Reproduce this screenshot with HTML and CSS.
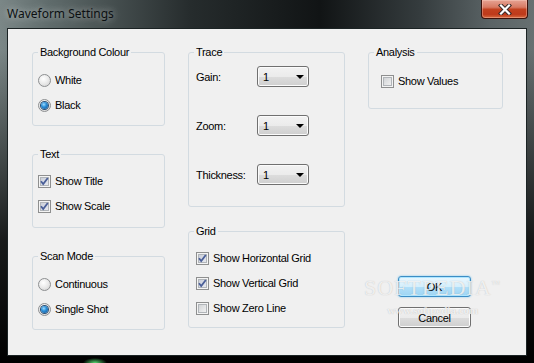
FILE: index.html
```html
<!DOCTYPE html>
<html lang="en">

    <head>
        <meta charset="UTF-8">
        <meta name="viewport" content="width=device-width, initial-scale=1.0">
        <title>Waveform Settings</title>

        <link rel="stylesheet" href="styles.css">
    </head>

    <body>
        <div class="window">
            <div class="titlebar">
                <span class="title">Waveform Settings</span>
                <span class="close">
                    <svg width="14" height="11" viewBox="0 0 14 11">
                        <path d="M3 1.5l8 8M11 1.5l-8 8" stroke="#3a2a28" stroke-width="4.2" stroke-linecap="square" />
                        <path d="M3 1.5l8 8M11 1.5l-8 8" stroke="#fff" stroke-width="2.2" stroke-linecap="square" />
                    </svg>
                </span>
            </div>

            <div class="client">
                <div class="col">
                    <fieldset class="group bg">
                        <legend>Background Colour</legend>
                        <div class="rows">
                            <label class="opt"><span class="radio"></span>White</label>
                            <label class="opt"><span class="radio on"></span>Black</label>
                        </div>
                    </fieldset>

                    <fieldset class="group">
                        <legend>Text</legend>
                        <div class="rows">
                            <label class="opt"><span class="check on"><svg viewBox="0 0 11 11"><path d="M2 5.2l2.2 2.8 4.6-6" /></svg></span>Show Title</label>
                            <label class="opt"><span class="check on"><svg viewBox="0 0 11 11"><path d="M2 5.2l2.2 2.8 4.6-6" /></svg></span>Show Scale</label>
                        </div>
                    </fieldset>

                    <fieldset class="group scan">
                        <legend>Scan Mode</legend>
                        <div class="rows">
                            <label class="opt"><span class="radio"></span>Continuous</label>
                            <label class="opt"><span class="radio on"></span>Single Shot</label>
                        </div>
                    </fieldset>
                </div>

                <div class="col">
                    <fieldset class="group trace">
                        <legend>Trace</legend>
                        <div class="fields">
                            <div class="field"><span class="name">Gain:</span><span class="combo">1<i class="arrow"></i></span></div>
                            <div class="field"><span class="name">Zoom:</span><span class="combo">1<i class="arrow"></i></span></div>
                            <div class="field"><span class="name">Thickness:</span><span class="combo">1<i class="arrow"></i></span></div>
                        </div>
                    </fieldset>

                    <fieldset class="group grid">
                        <legend>Grid</legend>
                        <div class="rows">
                            <label class="opt"><span class="check on"><svg viewBox="0 0 11 11"><path d="M2 5.2l2.2 2.8 4.6-6" /></svg></span>Show Horizontal Grid</label>
                            <label class="opt"><span class="check on"><svg viewBox="0 0 11 11"><path d="M2 5.2l2.2 2.8 4.6-6" /></svg></span>Show Vertical Grid</label>
                            <label class="opt"><span class="check"></span>Show Zero Line</label>
                        </div>
                    </fieldset>
                </div>

                <div class="col">
                    <fieldset class="group analysis">
                        <legend>Analysis</legend>
                        <div class="rows">
                            <label class="opt"><span class="check"></span>Show Values</label>
                        </div>
                    </fieldset>

                    <button class="btn default">OK</button>
                    <button class="btn">Cancel</button>
                </div>

                <div class="watermark">
                    <span class="brand">SOFTPEDIA<sup>™</sup></span>
                    <span class="site">www.softpedia.com</span>
                </div>
            </div>
        </div>
    </body>

</html>
```

FILE: styles.css
```css
* {
    box-sizing: border-box;
}

html,
body {
    margin: 0;
    padding: 0;
    width: 534px;
    height: 363px;
    overflow: hidden;
}

body {
    background:
        radial-gradient(ellipse 12px 5px at 95px 363px, rgba(90, 230, 120, 0.95), rgba(40, 140, 60, 0) 100%),
        linear-gradient(to bottom, rgba(0, 0, 0, 0) 0, rgba(0, 0, 0, 0) 50px, rgba(0, 0, 0, 0.8) 240px, #000 100%),
        linear-gradient(to right, #7b8787 0, #5f6b6b 50px, #262c2d 190px, #111415 320px, #353c3e 420px, #5a6365 490px, #677071 100%);
    font-family: "Liberation Sans", Arial, sans-serif;
    font-size: 11px;
    color: #000;
}

.window {
    display: flex;
    flex-direction: column;
    height: 363px;
}

.titlebar {
    height: 28px;
    display: flex;
    justify-content: space-between;
    align-items: flex-start;
}

.title {
    margin: 5px 0 0 7px;
    font-family: "Noto Sans", "Open Sans", sans-serif;
    font-size: 12px;
    line-height: 17px;
    color: #0c1012;
    text-shadow: 0 0 6px rgba(255, 255, 255, 0.45), 0 0 12px rgba(255, 255, 255, 0.35);
}

.close {
    width: 47px;
    height: 19px;
    margin-right: 6px;
    display: flex;
    align-items: center;
    justify-content: center;
    border: 1px solid #3d120b;
    border-top: none;
    border-radius: 0 0 4px 4px;
    background: linear-gradient(#e6a393 0, #d77a63 40%, #c2411f 52%, #bf3a1b 80%, #d86a3f 100%);
    box-shadow: inset 0 0 0 1px rgba(255, 220, 210, 0.35);
}

.close svg {
    display: block;
}

.client {
    position: relative;
    height: 328px;
    margin: 0 7px;
    border: 1px solid #1b2324;
    background-color: #f0f0f0;
    padding: 17px 0 0 24px;
    display: grid;
    grid-template-columns: 133px 157px 135px;
    column-gap: 23px;
    align-items: start;
    letter-spacing: -0.3px;
}

.col {
    display: flex;
    flex-direction: column;
    align-items: stretch;
}

.group {
    margin: 0;
    padding: 0;
    min-width: 0;
    border: 1px solid #d3dbe1;
    border-radius: 3px;
}

.group + .group {
    margin-top: 22px;
}

legend {
    margin-left: 5px;
    padding: 0 2px;
    line-height: 13px;
}

.rows {
    display: flex;
    flex-direction: column;
    gap: 12px;
    padding: 14px 0 14px 5px;
}

.bg .rows {
    padding: 15px 0 13px 5px;
}

.scan .rows {
    padding: 15px 0 13px 5px;
}

.opt {
    display: flex;
    align-items: center;
    gap: 4px;
    height: 13px;
    line-height: 13px;
    white-space: nowrap;
}

.radio {
    width: 13px;
    height: 13px;
    flex: none;
    border-radius: 50%;
    border: 1px solid #8d8f91;
    background: radial-gradient(circle at 40% 35%, #ffffff 0, #ececec 45%, #cfcfcf 100%);
    display: flex;
    align-items: center;
    justify-content: center;
}

.radio.on::after {
    content: '';
    width: 7px;
    height: 7px;
    border-radius: 50%;
    background: radial-gradient(circle at 40% 35%, #9fdcff 0, #2b8fd8 40%, #0d4f93 100%);
    box-shadow: 0 0 0 1px #2d4f72;
}

.check {
    width: 13px;
    height: 13px;
    flex: none;
    border: 1px solid #8e8f8f;
    background: linear-gradient(135deg, #c9cccf 0, #e6e7e8 60%, #f7f7f7 100%);
    box-shadow: inset 0 0 0 1px #f4f4f4, inset 0 0 0 2px #b1b5b9;
}

.check.on {
    background: linear-gradient(135deg, #c3c8d3 0, #dde0e8 60%, #eef0f4 100%);
}

.check svg {
    display: block;
    width: 11px;
    height: 11px;
}

.check path {
    fill: none;
    stroke: #4a5f98;
    stroke-width: 1.8;
}

.fields {
    display: flex;
    flex-direction: column;
    gap: 28px;
    padding: 7px 0 21px 7px;
}

.field {
    display: flex;
    align-items: center;
    height: 21px;
}

.name {
    width: 61px;
}

.combo {
    width: 52px;
    height: 21px;
    display: flex;
    align-items: center;
    padding: 0 4px 0 5px;
    border: 1px solid #707070;
    border-radius: 3px;
    background: linear-gradient(#f2f2f2 0, #ebebeb 50%, #dddddd 50%, #cfcfcf 100%);
    box-shadow: inset 0 0 0 1px #fbfbfb;
}

.arrow {
    margin-left: auto;
    width: 0;
    height: 0;
    border-top: 4px solid #000;
    border-left: 4px solid transparent;
    border-right: 4px solid transparent;
}

.group.grid {
    margin-top: 18px;
}

.grid .rows {
    padding: 14px 0 12px 7px;
}

.analysis .rows {
    padding: 16px 0 20px 12px;
}

.btn {
    align-self: flex-start;
    width: 73px;
    height: 21px;
    margin: 10px 0 0 30px;
    padding: 0;
    font-family: inherit;
    font-size: 11px;
    letter-spacing: inherit;
    color: #000;
    border: 1px solid #707070;
    border-radius: 3px;
    background: linear-gradient(#f2f2f2 0, #ebebeb 50%, #dddddd 50%, #cfcfcf 100%);
    box-shadow: inset 0 0 0 1px #fcfcfc;
}

.btn.default {
    margin-top: 167px;
    border-color: #3c8dc5;
    background: linear-gradient(#eaf7fe 0, #d5effc 50%, #b3e0f9 50%, #9ed5f3 100%);
    box-shadow: inset 0 0 0 1px #aee6ff, 0 0 2px #6cc3f0;
}

.watermark {
    position: absolute;
    left: 356px;
    top: 243px;
    display: flex;
    flex-direction: column;
    align-items: center;
    pointer-events: none;
    font-family: "Liberation Serif", serif;
    color: rgba(255, 255, 255, 0.75);
    text-shadow: 0 0 1px rgba(120, 120, 120, 0.45);
}

.brand {
    font-size: 22px;
    line-height: 24px;
    letter-spacing: 1px;
}

.brand sup {
    font-size: 9px;
}

.site {
    margin-top: 4px;
    font-size: 11px;
    font-weight: bold;
    letter-spacing: 0;
}
```
